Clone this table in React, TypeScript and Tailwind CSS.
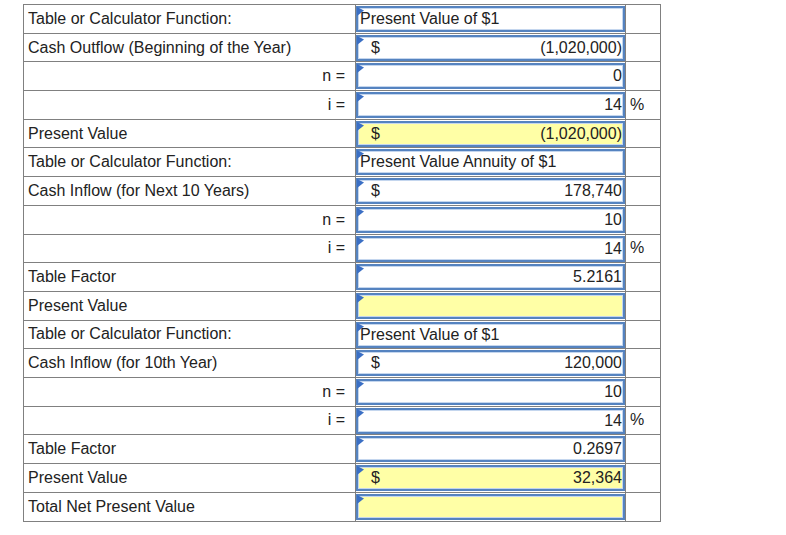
type Cell = {
  text?: string
  dollar?: boolean
  value?: string
  yellow?: boolean
}

type Row = {
  label: string
  right?: boolean
  input: Cell
  pct?: boolean
}

const rows: Row[] = [
  { label: 'Table or Calculator Function:', input: { text: 'Present Value of $1' } },
  { label: 'Cash Outflow (Beginning of the Year)', input: { dollar: true, value: '(1,020,000)' } },
  { label: 'n =', right: true, input: { value: '0' } },
  { label: 'i =', right: true, input: { value: '14' }, pct: true },
  { label: 'Present Value', input: { dollar: true, value: '(1,020,000)', yellow: true } },
  { label: 'Table or Calculator Function:', input: { text: 'Present Value Annuity of $1' } },
  { label: 'Cash Inflow (for Next 10 Years)', input: { dollar: true, value: '178,740' } },
  { label: 'n =', right: true, input: { value: '10' } },
  { label: 'i =', right: true, input: { value: '14' }, pct: true },
  { label: 'Table Factor', input: { value: '5.2161' } },
  { label: 'Present Value', input: { yellow: true } },
  { label: 'Table or Calculator Function:', input: { text: 'Present Value of $1' } },
  { label: 'Cash Inflow (for 10th Year)', input: { dollar: true, value: '120,000' } },
  { label: 'n =', right: true, input: { value: '10' } },
  { label: 'i =', right: true, input: { value: '14' }, pct: true },
  { label: 'Table Factor', input: { value: '0.2697' } },
  { label: 'Present Value', input: { dollar: true, value: '32,364', yellow: true } },
  { label: 'Total Net Present Value', input: { yellow: true } },
]

function Flag() {
  return (
    <svg className="absolute -left-px -top-px" width="8" height="10" viewBox="0 0 8 10">
      <polygon points="0,0 7,3.5 0,9" fill="#3b6fc4" />
    </svg>
  )
}

function InputBox({ cell }: { cell: Cell }) {
  return (
    <div
      className={`relative mt-px h-[26px] border-2 border-[#5583c0] shadow-[inset_0_0_0_1px_#c4d6ee] flex items-center ${
        cell.yellow ? 'bg-[#ffffa6]' : 'bg-white'
      }`}
    >
      <Flag />
      {cell.text ? (
        <span className="pl-[2px] text-[#222]">{cell.text}</span>
      ) : (
        <div className="flex w-full items-center justify-between pl-[13px] pr-[1px] text-[#222]">
          <span>{cell.dollar ? '$' : ''}</span>
          <span>{cell.value ?? ''}</span>
        </div>
      )}
    </div>
  )
}

export default function App() {
  return (
    <div className="min-h-screen bg-white pt-[4px] pl-[23px] font-['Liberation_Sans',Arial,sans-serif] text-[16px] leading-none">
      <div className="w-[638px] border border-[#808080]">
        {rows.map((row, i) => (
          <div
            key={i}
            className={`flex h-[28.7px] ${i < rows.length - 1 ? 'border-b border-[#808080]' : ''}`}
          >
            <div
              className={`flex w-[332px] items-center border-r border-[#808080] text-[#222] ${
                row.right ? 'justify-end pr-[10px]' : 'pl-[4px]'
              }`}
            >
              {row.label}
            </div>
            <div className="w-[270px] border-r border-[#808080]">
              <InputBox cell={row.input} />
            </div>
            <div className="flex flex-1 items-center pl-[4px] text-[#222]">{row.pct ? '%' : ''}</div>
          </div>
        ))}
      </div>
    </div>
  )
}
